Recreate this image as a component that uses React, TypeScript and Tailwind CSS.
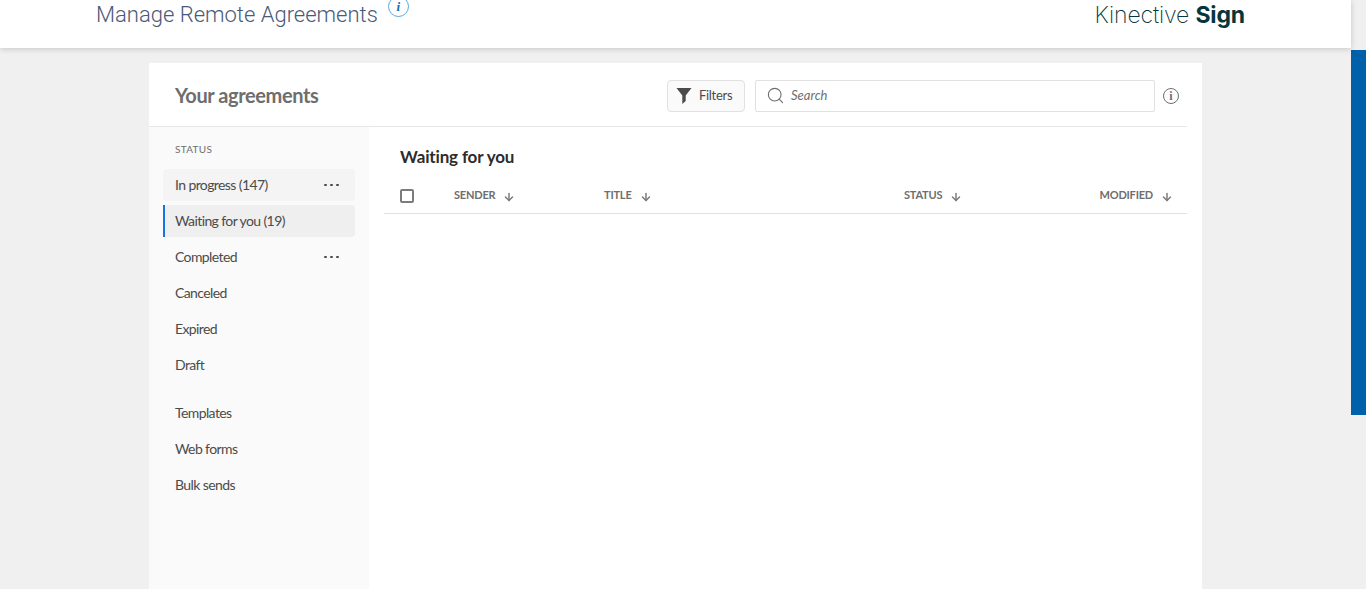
import { ArrowDown, Search } from 'lucide-react';

const sans = 'font-["Lato","Noto_Sans",sans-serif]';

function Dots() {
  return (
    <span className="ml-auto mr-[16px] flex gap-[3px]">
      <span className="h-[2px] w-[3px] rounded-full bg-[#4b4b4b]" />
      <span className="h-[2px] w-[3px] rounded-full bg-[#4b4b4b]" />
      <span className="h-[2px] w-[3px] rounded-full bg-[#4b4b4b]" />
    </span>
  );
}

function NavItem({ label, dots, hover, active }: { label: string; dots?: boolean; hover?: boolean; active?: boolean }) {
  return (
    <div className={`flex h-[32px] items-center pb-[1px] text-[14px] tracking-[-0.6px] text-[#4b4b4b] ${hover ? 'bg-[#f4f4f4]' : ''} ${active ? 'rounded-r-[4px] border-l-2 border-[#1473e6] bg-[#efefef] pl-[10px]' : 'rounded-[4px] pl-[12px]'}`}>
      <span>{label}</span>
      {dots && <Dots />}
    </div>
  );
}

function Column({ label, className }: { label: string; className?: string }) {
  return (
    <div className={`flex items-center text-[11px] font-bold tracking-[-0.2px] text-[#6e6e6e] ${className ?? ''}`}>
      <span className="mb-[2px]">{label}</span>
      <ArrowDown size={12} strokeWidth={3} className="ml-[8px] mt-[2px] text-[#7c7c7c]" />
    </div>
  );
}

export default function App() {
  return (
    <div className={`flex h-[589px] w-[1366px] overflow-hidden bg-[#f0f0f0] ${sans}`}>
      <div className="flex min-w-0 flex-1 flex-col">
        <header className="relative z-10 flex h-[48px] shrink-0 bg-white pl-[96px] pr-[106px] shadow-[0_1px_6px_rgba(0,0,0,0.18)]">
          <h1 className='font-["Roboto",sans-serif] text-[22px] font-light leading-[29px] text-[#4a5a78]'>Manage Remote Agreements</h1>
          <span className='ml-[10px] mt-[-4px] flex h-[21px] w-[21px] items-center justify-center rounded-full border border-[#5aa5dc] font-["Liberation_Serif",serif] text-[13px] font-bold italic text-[#0e6cb8]'>i</span>
          <div className='ml-auto mt-[-1px] font-["Inter",sans-serif] text-[23px] font-extralight leading-[32px] tracking-[-0.15px] text-[#06363c]'>
            Kinective <span className="font-bold">Sign</span>
          </div>
        </header>
        <main className="mx-[149px] mt-[15px] flex min-h-0 flex-1 flex-col bg-white pr-[15px]">
          <div className="flex h-[64px] shrink-0 items-center border-b border-[#e8e8e8] pl-[26px] pr-[8px] pt-[2px]">
            <h2 className="mt-[-2px] text-[20px] font-bold tracking-[-0.4px] text-[#6e6e6e]">Your agreements</h2>
            <button className="ml-auto flex h-[32px] w-[78px] items-center rounded-[4px] border border-[#e1e1e1] bg-[#fafafa] pl-[8px] text-[13px] tracking-[-0.3px] text-[#4b4b4b]">
              <svg width="16" height="17" viewBox="0 0 16 17" className="mr-[7px]">
                <path d="M0.5 1h15L9.7 8.5v5.5L6.3 17V8.5z" fill="#4b4b4b" />
              </svg>
              Filters
            </button>
            <div className="ml-[10px] flex h-[32px] w-[400px] items-center rounded-[2px] border border-[#e1e1e1] pl-[10px] text-[13px] italic text-[#6e6e6e]">
              <Search size={19} strokeWidth={1.4} className="mr-[6px] text-[#6e6e6e]" />
              Search
            </div>
            <span className='ml-[8px] flex h-[16px] w-[16px] items-center justify-center rounded-full border border-[#6e6e6e] font-["Liberation_Serif",serif] text-[12px] font-bold text-[#6e6e6e]'>i</span>
          </div>
          <div className="flex min-h-0 flex-1">
            <aside className="w-[220px] shrink-0 bg-[#fafafa] px-[14px] pt-[15px]">
              <div className="mb-[13px] pl-[12px] text-[10px] leading-[14px] tracking-[0.3px] text-[#6e6e6e]">STATUS</div>
              <div className="flex flex-col gap-[4px]">
                <NavItem label="In progress (147)" dots hover />
                <NavItem label="Waiting for you (19)" active />
                <NavItem label="Completed" dots />
                <NavItem label="Canceled" />
                <NavItem label="Expired" />
                <NavItem label="Draft" />
              </div>
              <div className="mt-[16px] flex flex-col gap-[4px]">
                <NavItem label="Templates" />
                <NavItem label="Web forms" />
                <NavItem label="Bulk sends" />
              </div>
            </aside>
            <section className="min-w-0 flex-1 pl-[15px]">
              <h3 className="ml-[16px] mt-[19px] text-[17px] font-bold leading-[22px] tracking-[-0.15px] text-[#2c2c2c]">Waiting for you</h3>
              <div className="mt-[11px] flex h-[35px] items-center border-b border-[#e1e1e1] pl-[16px] pr-[14px]">
                <span className="h-[14px] w-[14px] rounded-[2px] border-2 border-[#7c7c7c]" />
                <Column label="SENDER" className="ml-[40px] w-[150px]" />
                <Column label="TITLE" className="w-[300px]" />
                <Column label="STATUS" />
                <Column label="MODIFIED" className="ml-auto" />
              </div>
            </section>
          </div>
        </main>
      </div>
      <div className="w-[15px] shrink-0 pt-[50px]">
        <div className="h-[365px] bg-[#0060a9]" />
      </div>
    </div>
  );
}
